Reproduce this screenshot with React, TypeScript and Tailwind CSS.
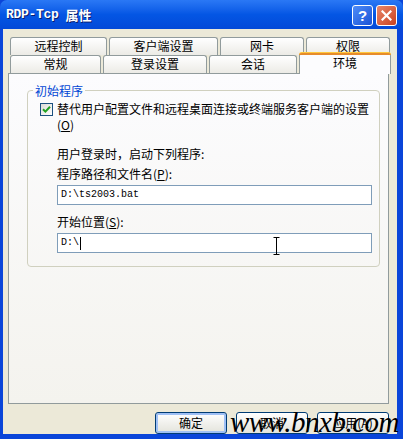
import React from 'react'

const cjk = { fontFamily: '"Noto Sans CJK SC", "Liberation Sans", sans-serif' }
const mono = { fontFamily: '"Liberation Mono", "Noto Sans CJK SC", monospace' }

function Tab({ label, w, active }: { label: string; w: string; active?: boolean }) {
  if (active) {
    return (
      <div
        className={`${w} h-[21px] -mt-[2px] relative z-10 rounded-t-[3px] border-x border-[#919b9c] bg-[#fcfcfe] flex justify-center text-[12px] leading-[15px] text-black`}
      >
        <div className="absolute -top-px -left-px -right-px h-[3px] rounded-t-[3px] bg-[#e68b2c] border-t border-[#ffc83c]" />
        <span className="pt-[2px]">{label}</span>
      </div>
    )
  }
  return (
    <div
      className={`${w} h-[18px] rounded-t-[3px] border border-b-0 border-[#919b9c] bg-gradient-to-b from-white to-[#ecebe6] flex justify-center text-[12px] leading-[16px] text-black`}
    >
      {label}
    </div>
  )
}

function XpButton({ label, primary }: { label: string; primary?: boolean }) {
  return (
    <div
      className={`w-[72px] h-[22px] rounded-[3px] border border-[#003c74] bg-gradient-to-b from-white to-[#e3e3db] flex items-center justify-center text-[12px] text-black ${
        primary ? 'shadow-[inset_0_0_0_2px_#9fc0f5]' : ''
      }`}
    >
      {label}
    </div>
  )
}

export default function App() {
  return (
    <div className="w-[403px] h-[439px] bg-[#0a45d9] flex flex-col overflow-hidden select-none" style={cjk}>
      {/* title bar */}
      <div className="h-[29px] shrink-0 bg-gradient-to-b from-[#2a78f5] via-[#0456e4] to-[#0349d8] flex items-center pl-[6px] pr-[6px] rounded-t-[7px]">
        <div className="flex-1 text-white font-bold text-[13px] leading-none flex items-center gap-[7px] [text-shadow:1px_1px_0_#0a1e6e]">
          <span style={mono} className="tracking-[-0.3px]">RDP-Tcp</span>
          <span>属性</span>
        </div>
        <div className="flex gap-[3px] mt-[1px]">
          <div className="w-[21px] h-[21px] rounded-[3px] border border-white bg-gradient-to-br from-[#4f8cf8] to-[#1a52d6] flex items-center justify-center text-white font-bold text-[15px] leading-none" style={{ fontFamily: '"Liberation Sans", sans-serif' }}>
            ?
          </div>
          <div className="w-[21px] h-[21px] rounded-[3px] border border-white bg-gradient-to-br from-[#e8866a] to-[#c9401c] flex items-center justify-center">
            <svg width="11" height="11" viewBox="0 0 11 11">
              <path d="M1.5 1.5 L9.5 9.5 M9.5 1.5 L1.5 9.5" stroke="white" strokeWidth="2.2" strokeLinecap="square" />
            </svg>
          </div>
        </div>
      </div>

      {/* body */}
      <div className="flex-1 ml-[3px] mr-[6px] mb-[5px] bg-[#ece9d8] flex flex-col px-[5px] pt-[8px]">
        {/* tabs */}
        <div className="flex gap-[2px] pl-[2px]">
          <Tab label="远程控制" w="w-[97px]" />
          <Tab label="客户端设置" w="w-[109px]" />
          <Tab label="网卡" w="w-[84px]" />
          <Tab label="权限" w="w-[84px]" />
        </div>
        <div className="flex gap-[2px] pl-[2px] items-start">
          <Tab label="常规" w="w-[91px]" />
          <Tab label="登录设置" w="w-[104px]" />
          <Tab label="会话" w="w-[88px]" />
          <Tab label="环境" w="w-[92px]" active />
        </div>

        {/* panel */}
        <div className="h-[331px] -mt-px border border-[#919b9c] bg-gradient-to-b from-[#fcfcfe] to-[#f4f3ee] pl-[18px] pr-[8px] pt-[16px] mr-[3px]">
          <div className="relative border border-[#d0d0bf] rounded-[4px] h-[177px] pt-[10px] pl-[12px] pr-[7px]">
            <div className="absolute -top-[8px] left-[5px] px-[2px] bg-[#fbfbfc] text-[12px] leading-[15px] text-[#0046d5]">初始程序</div>
            <div className="flex gap-[4px] text-[12px] leading-[16px] text-black">
              <div className="w-[13px] h-[13px] mt-[2px] shrink-0 border border-[#1c5180] bg-gradient-to-br from-[#dcdcd7] to-white flex items-center justify-center">
                <svg width="9" height="9" viewBox="0 0 9 9">
                  <path d="M1 4.2 L3.4 6.6 L8 1.8" fill="none" stroke="#21a121" strokeWidth="2" />
                </svg>
              </div>
              <div>
                替代用户配置文件和远程桌面连接或终端服务客户端的设置
                <br />
                (<span className="underline">O</span>)
              </div>
            </div>

            <div className="pl-[17px] mt-[13px] text-[12px] leading-[16px] text-black">
              <div>用户登录时，启动下列程序:</div>
              <div className="mt-[4px]">程序路径和文件名(<span className="underline">P</span>):</div>
              <div className="mt-[3px] h-[20px] border border-[#7f9db9] bg-white flex items-center pl-[3px] text-[10px]" style={mono}>
                D:\ts2003.bat
              </div>
              <div className="mt-[9px]">开始位置(<span className="underline">S</span>):</div>
              <div className="mt-[3px] h-[20px] border border-[#7f9db9] bg-white flex items-center pl-[3px] text-[10px] relative" style={mono}>
                D:\<span className="inline-block w-px h-[13px] bg-black ml-[1px]" />
                <svg className="absolute left-[215px] top-[3px]" width="7" height="18" viewBox="0 0 7 18">
                  <path d="M0.5 0.5 H6.5 M3.5 0.5 V17.5 M0.5 17.5 H6.5" stroke="black" strokeWidth="1" fill="none" />
                </svg>
              </div>
            </div>
          </div>
        </div>

        {/* buttons */}
        <div className="flex justify-end gap-[9px] mt-[8px] mr-[3px] relative">
          <XpButton label="确定" primary />
          <XpButton label="取消" />
          <XpButton label="应用(A)" />
          <div
            className="absolute right-[-10px] -top-[4px] italic text-[29px] leading-none text-black tracking-[-0.5px] pointer-events-none"
            style={{ fontFamily: '"Liberation Serif", serif' }}
          >
            www.bnxb.com
          </div>
        </div>
      </div>
    </div>
  )
}
